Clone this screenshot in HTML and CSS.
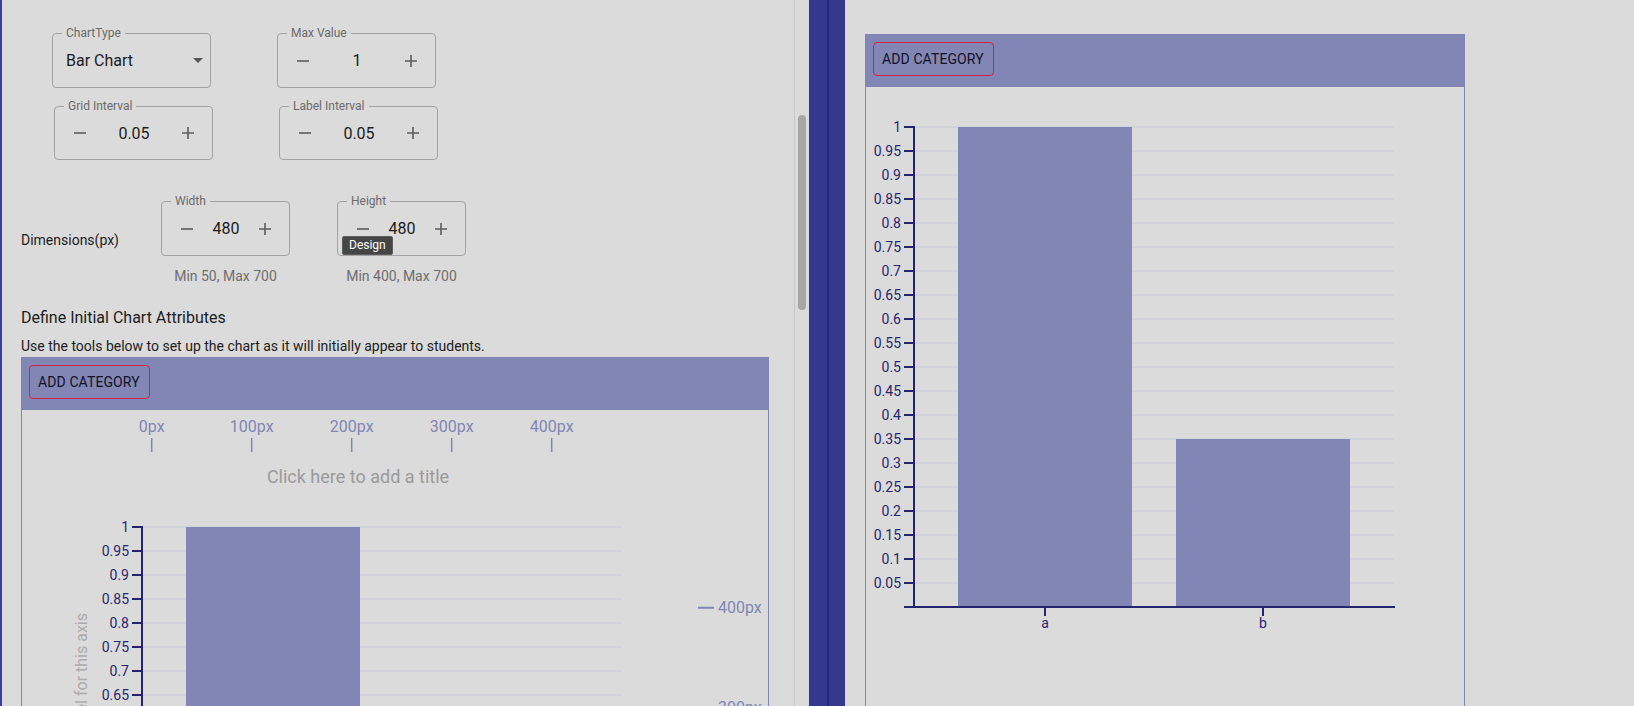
FILE: index.html
```html
<!DOCTYPE html>
<html lang="en">
<head>
<meta charset="utf-8">
<title>Chart editor</title>
<link rel="stylesheet" href="styles.css">
</head>
<body>
<div class="app">
  <div class="left">
    <div class="left-content">
      <div class="row row1">
        <div class="field select-field">
          <span class="flabel">ChartType</span>
          <span class="fvalue">Bar Chart</span>
          <span class="arrow"></span>
        </div>
        <div class="field stepper">
          <span class="flabel">Max Value</span>
          <svg class="ico" viewBox="0 0 14 14"><path d="M1 7H13"/></svg>
          <span class="num">1</span>
          <svg class="ico" viewBox="0 0 14 14"><path d="M1 7H13M7 1V13"/></svg>
        </div>
      </div>
      <div class="row row2">
        <div class="field stepper">
          <span class="flabel">Grid Interval</span>
          <svg class="ico" viewBox="0 0 14 14"><path d="M1 7H13"/></svg>
          <span class="num">0.05</span>
          <svg class="ico" viewBox="0 0 14 14"><path d="M1 7H13M7 1V13"/></svg>
        </div>
        <div class="field stepper">
          <span class="flabel">Label Interval</span>
          <svg class="ico" viewBox="0 0 14 14"><path d="M1 7H13"/></svg>
          <span class="num">0.05</span>
          <svg class="ico" viewBox="0 0 14 14"><path d="M1 7H13M7 1V13"/></svg>
        </div>
      </div>
      <div class="dims">
        <div class="dims-label">Dimensions(px)</div>
        <div class="dim-col">
          <div class="field stepper">
            <span class="flabel">Width</span>
            <svg class="ico" viewBox="0 0 14 14"><path d="M1 7H13"/></svg>
            <span class="num">480</span>
            <svg class="ico" viewBox="0 0 14 14"><path d="M1 7H13M7 1V13"/></svg>
          </div>
          <div class="helper">Min 50, Max 700</div>
        </div>
        <div class="dim-col">
          <div class="field stepper">
            <span class="flabel">Height</span>
            <svg class="ico" viewBox="0 0 14 14"><path d="M1 7H13"/></svg>
            <span class="num">480</span>
            <svg class="ico" viewBox="0 0 14 14"><path d="M1 7H13M7 1V13"/></svg>
            <span class="tooltip">Design</span>
          </div>
          <div class="helper">Min 400, Max 700</div>
        </div>
      </div>
      <div class="section-title">Define Initial Chart Attributes</div>
      <div class="section-desc">Use the tools below to set up the chart as it will initially appear to students.</div>
      <div class="card left-card">
        <div class="card-header"><button class="btn">ADD CATEGORY</button></div>
        <svg class="card-body" width="746" height="700" viewBox="0 0 746 700">
          <g class="ruler">
            <text x="129.7" y="16">0px</text>
            <text x="229.7" y="16">100px</text>
            <text x="329.7" y="16">200px</text>
            <text x="429.7" y="16">300px</text>
            <text x="529.7" y="16">400px</text>
            <path d="M129.7 28V42M229.7 28V42M329.7 28V42M429.7 28V42M529.7 28V42"/>
          </g>
          <text class="chart-title" x="336" y="66">Click here to add a title</text>
          <text class="axis-title" x="59" y="203" transform="rotate(-90 59 203)">Click here to add a label for this axis</text>
          <g class="vruler">
            <path d="M676 197.7H692M676 297.7H692"/>
            <text x="696" y="197.7">400px</text>
            <text x="696" y="297.7">300px</text>
          </g>
          <g transform="translate(120 117)">
            <path class="grid" d="M0 0H480M0 24H480M0 48H480M0 72H480M0 96H480M0 120H480M0 144H480M0 168H480M0 192H480M0 216H480M0 240H480M0 264H480M0 288H480M0 312H480M0 336H480M0 360H480M0 384H480M0 408H480M0 432H480M0 456H480"/>
            <rect class="bar" x="44" y="0" width="174" height="480"/>
            <rect class="bar" x="262" y="312" width="174" height="168"/>
            <path class="axis" d="M-10 0H0M-10 24H0M-10 48H0M-10 72H0M-10 96H0M-10 120H0M-10 144H0M-10 168H0M-10 192H0M-10 216H0M-10 240H0M-10 264H0M-10 288H0M-10 312H0M-10 336H0M-10 360H0M-10 384H0M-10 408H0M-10 432H0M-10 456H0M0 -1V481M-10 480H481"/>
            <g class="ylab">
              <text x="-13" y="0">1</text>
              <text x="-13" y="24">0.95</text>
              <text x="-13" y="48">0.9</text>
              <text x="-13" y="72">0.85</text>
              <text x="-13" y="96">0.8</text>
              <text x="-13" y="120">0.75</text>
              <text x="-13" y="144">0.7</text>
              <text x="-13" y="168">0.65</text>
              <text x="-13" y="192">0.6</text>
              <text x="-13" y="216">0.55</text>
              <text x="-13" y="240">0.5</text>
              <text x="-13" y="264">0.45</text>
              <text x="-13" y="288">0.4</text>
              <text x="-13" y="312">0.35</text>
              <text x="-13" y="336">0.3</text>
              <text x="-13" y="360">0.25</text>
              <text x="-13" y="384">0.2</text>
              <text x="-13" y="408">0.15</text>
              <text x="-13" y="432">0.1</text>
              <text x="-13" y="456">0.05</text>
            </g>
          </g>
        </svg>
      </div>
    </div>
    <div class="scrollbar"><div class="thumb"></div></div>
  </div>
  <div class="divider"><div class="divider-line"></div></div>
  <div class="right">
    <div class="card right-card">
      <div class="card-header"><button class="btn">ADD CATEGORY</button></div>
      <svg class="card-body" width="598" height="640" viewBox="0 0 598 640">
        <g transform="translate(48 40)">
          <path class="grid" d="M0 0H480M0 24H480M0 48H480M0 72H480M0 96H480M0 120H480M0 144H480M0 168H480M0 192H480M0 216H480M0 240H480M0 264H480M0 288H480M0 312H480M0 336H480M0 360H480M0 384H480M0 408H480M0 432H480M0 456H480"/>
          <rect class="bar" x="44" y="0" width="174" height="480"/>
          <rect class="bar" x="262" y="312" width="174" height="168"/>
          <path class="axis" d="M-10 0H0M-10 24H0M-10 48H0M-10 72H0M-10 96H0M-10 120H0M-10 144H0M-10 168H0M-10 192H0M-10 216H0M-10 240H0M-10 264H0M-10 288H0M-10 312H0M-10 336H0M-10 360H0M-10 384H0M-10 408H0M-10 432H0M-10 456H0M0 -1V481M-10 480H481M131 480V489M349 480V489"/>
          <g class="ylab">
            <text x="-13" y="0">1</text>
            <text x="-13" y="24">0.95</text>
            <text x="-13" y="48">0.9</text>
            <text x="-13" y="72">0.85</text>
            <text x="-13" y="96">0.8</text>
            <text x="-13" y="120">0.75</text>
            <text x="-13" y="144">0.7</text>
            <text x="-13" y="168">0.65</text>
            <text x="-13" y="192">0.6</text>
            <text x="-13" y="216">0.55</text>
            <text x="-13" y="240">0.5</text>
            <text x="-13" y="264">0.45</text>
            <text x="-13" y="288">0.4</text>
            <text x="-13" y="312">0.35</text>
            <text x="-13" y="336">0.3</text>
            <text x="-13" y="360">0.25</text>
            <text x="-13" y="384">0.2</text>
            <text x="-13" y="408">0.15</text>
            <text x="-13" y="432">0.1</text>
            <text x="-13" y="456">0.05</text>
          </g>
          <g class="xlab">
            <text x="131" y="496">a</text>
            <text x="349" y="496">b</text>
          </g>
        </g>
      </svg>
    </div>
  </div>
</div>
</body>
</html>
```

FILE: styles.css
```css
* { box-sizing: border-box; }
html, body { margin: 0; height: 706px; overflow: hidden; }
body {
  font-family: Roboto, "Liberation Sans", Arial, sans-serif;
  background: #dbdbdb;
  color: #1c1c1c;
}
.app { display: flex; height: 706px; }

/* left panel */
.left { display: flex; width: 809px; flex: none; }
.left-content {
  width: 794px;
  height: 706px;
  border-left: 2px solid #3a3e9a;
  padding: 33px 0 0 19px;
  overflow: hidden;
}
.scrollbar {
  width: 15px;
  border-left: 1px solid #c8c8c8;
  padding: 115px 0 0 3px;
}
.thumb { width: 8px; height: 195px; border-radius: 4px; background: #a6a6a6; }

.row { display: flex; gap: 66px; }
.row1 { margin-left: 31px; }
.row2 { margin-left: 33px; margin-top: 18px; }

.field {
  position: relative;
  width: 159px;
  height: 55px;
  border: 1px solid #a2a2a2;
  border-radius: 4px;
  display: flex;
  align-items: center;
}
.row2 .field { height: 54px; }
.flabel {
  position: absolute;
  top: -8px;
  left: 9px;
  padding: 0 4px;
  font-size: 12px;
  line-height: 14px;
  color: #6a6a6a;
  background: #dbdbdb;
  white-space: nowrap;
}
.select-field { justify-content: space-between; padding: 0 7px 0 13px; }
.fvalue { font-size: 16px; color: #1c1c1c; }
.arrow {
  width: 0; height: 0;
  border-left: 5px solid transparent;
  border-right: 5px solid transparent;
  border-top: 5px solid #555;
}
.stepper { justify-content: space-between; padding: 0 17px 0 18px; }
.ico { width: 14px; height: 14px; flex: none; }
.ico path { stroke: #5c5c5c; stroke-width: 1.6; fill: none; }
.num { font-size: 16px; color: #1c1c1c; }

.dims { display: flex; margin-top: 41px; }
.dims-label { width: 140px; font-size: 14px; line-height: 16px; margin-top: 31px; }
.dim-col { display: flex; flex-direction: column; align-items: center; width: 129px; }
.dim-col + .dim-col { margin-left: 47px; }
.dim-col .field { width: 129px; }
.helper { margin-top: 12px; font-size: 14px; line-height: 16px; color: #6e6e6e; white-space: nowrap; }

.tooltip {
  position: absolute;
  left: 4px;
  top: 34px;
  height: 19px;
  padding: 0 6px;
  line-height: 17px;
  font-size: 12px;
  color: #fff;
  background: #454545;
  border: 1px solid #5c5c5c;
  border-radius: 2px;
}

.section-title { margin-top: 24px; font-size: 16px; line-height: 20px; }
.section-desc { margin-top: 10px; font-size: 14px; line-height: 17px; }

/* cards */
.card { border: 1px solid #8186b4; }
.left-card { width: 748px; margin-top: 2px; }
.card-header { background: #8186b4; padding: 7px 7px 11px; }
.btn {
  display: block;
  height: 34px;
  padding: 0 9px 0 8px;
  border: 1px solid #d3204b;
  border-radius: 4px;
  background: transparent;
  font-family: Roboto, "Liberation Sans", Arial, sans-serif;
  font-size: 14px;
  color: #121226;
  letter-spacing: 0.1px;
}
.card-body { display: block; }

/* chart svg */
.grid { stroke: #d1d1db; stroke-width: 1.5; fill: none; }
.bar { fill: #8186b4; }
.axis { stroke: #23236e; stroke-width: 2; fill: none; }
.ylab text { fill: #27276f; text-anchor: end; dominant-baseline: central; font-size: 14px; font-family: Roboto, sans-serif; }
.xlab text { fill: #27276f; text-anchor: middle; dominant-baseline: central; font-size: 14px; font-family: Roboto, sans-serif; }
.ruler text { fill: #8186b4; text-anchor: middle; dominant-baseline: central; font-size: 16px; font-family: Roboto, sans-serif; }
.ruler path { stroke: #8186b4; stroke-width: 1.5; }
.vruler text { fill: #8186b4; dominant-baseline: central; font-size: 16px; font-family: Roboto, sans-serif; }
.vruler path { stroke: #8186b4; stroke-width: 2; }
.chart-title { fill: #9a9a9a; text-anchor: middle; dominant-baseline: central; font-size: 18px; font-family: Roboto, sans-serif; }
.axis-title { fill: #acacac; text-anchor: end; dominant-baseline: central; font-size: 16px; font-family: Roboto, sans-serif; }

/* divider + right */
.divider { width: 36px; flex: none; background: #34388f; padding-left: 18px; }
.divider-line { width: 2px; height: 100%; background: #23277b; }
.right { flex: 1; padding: 34px 0 0 20px; }
.right-card { width: 600px; height: 720px; }
```
